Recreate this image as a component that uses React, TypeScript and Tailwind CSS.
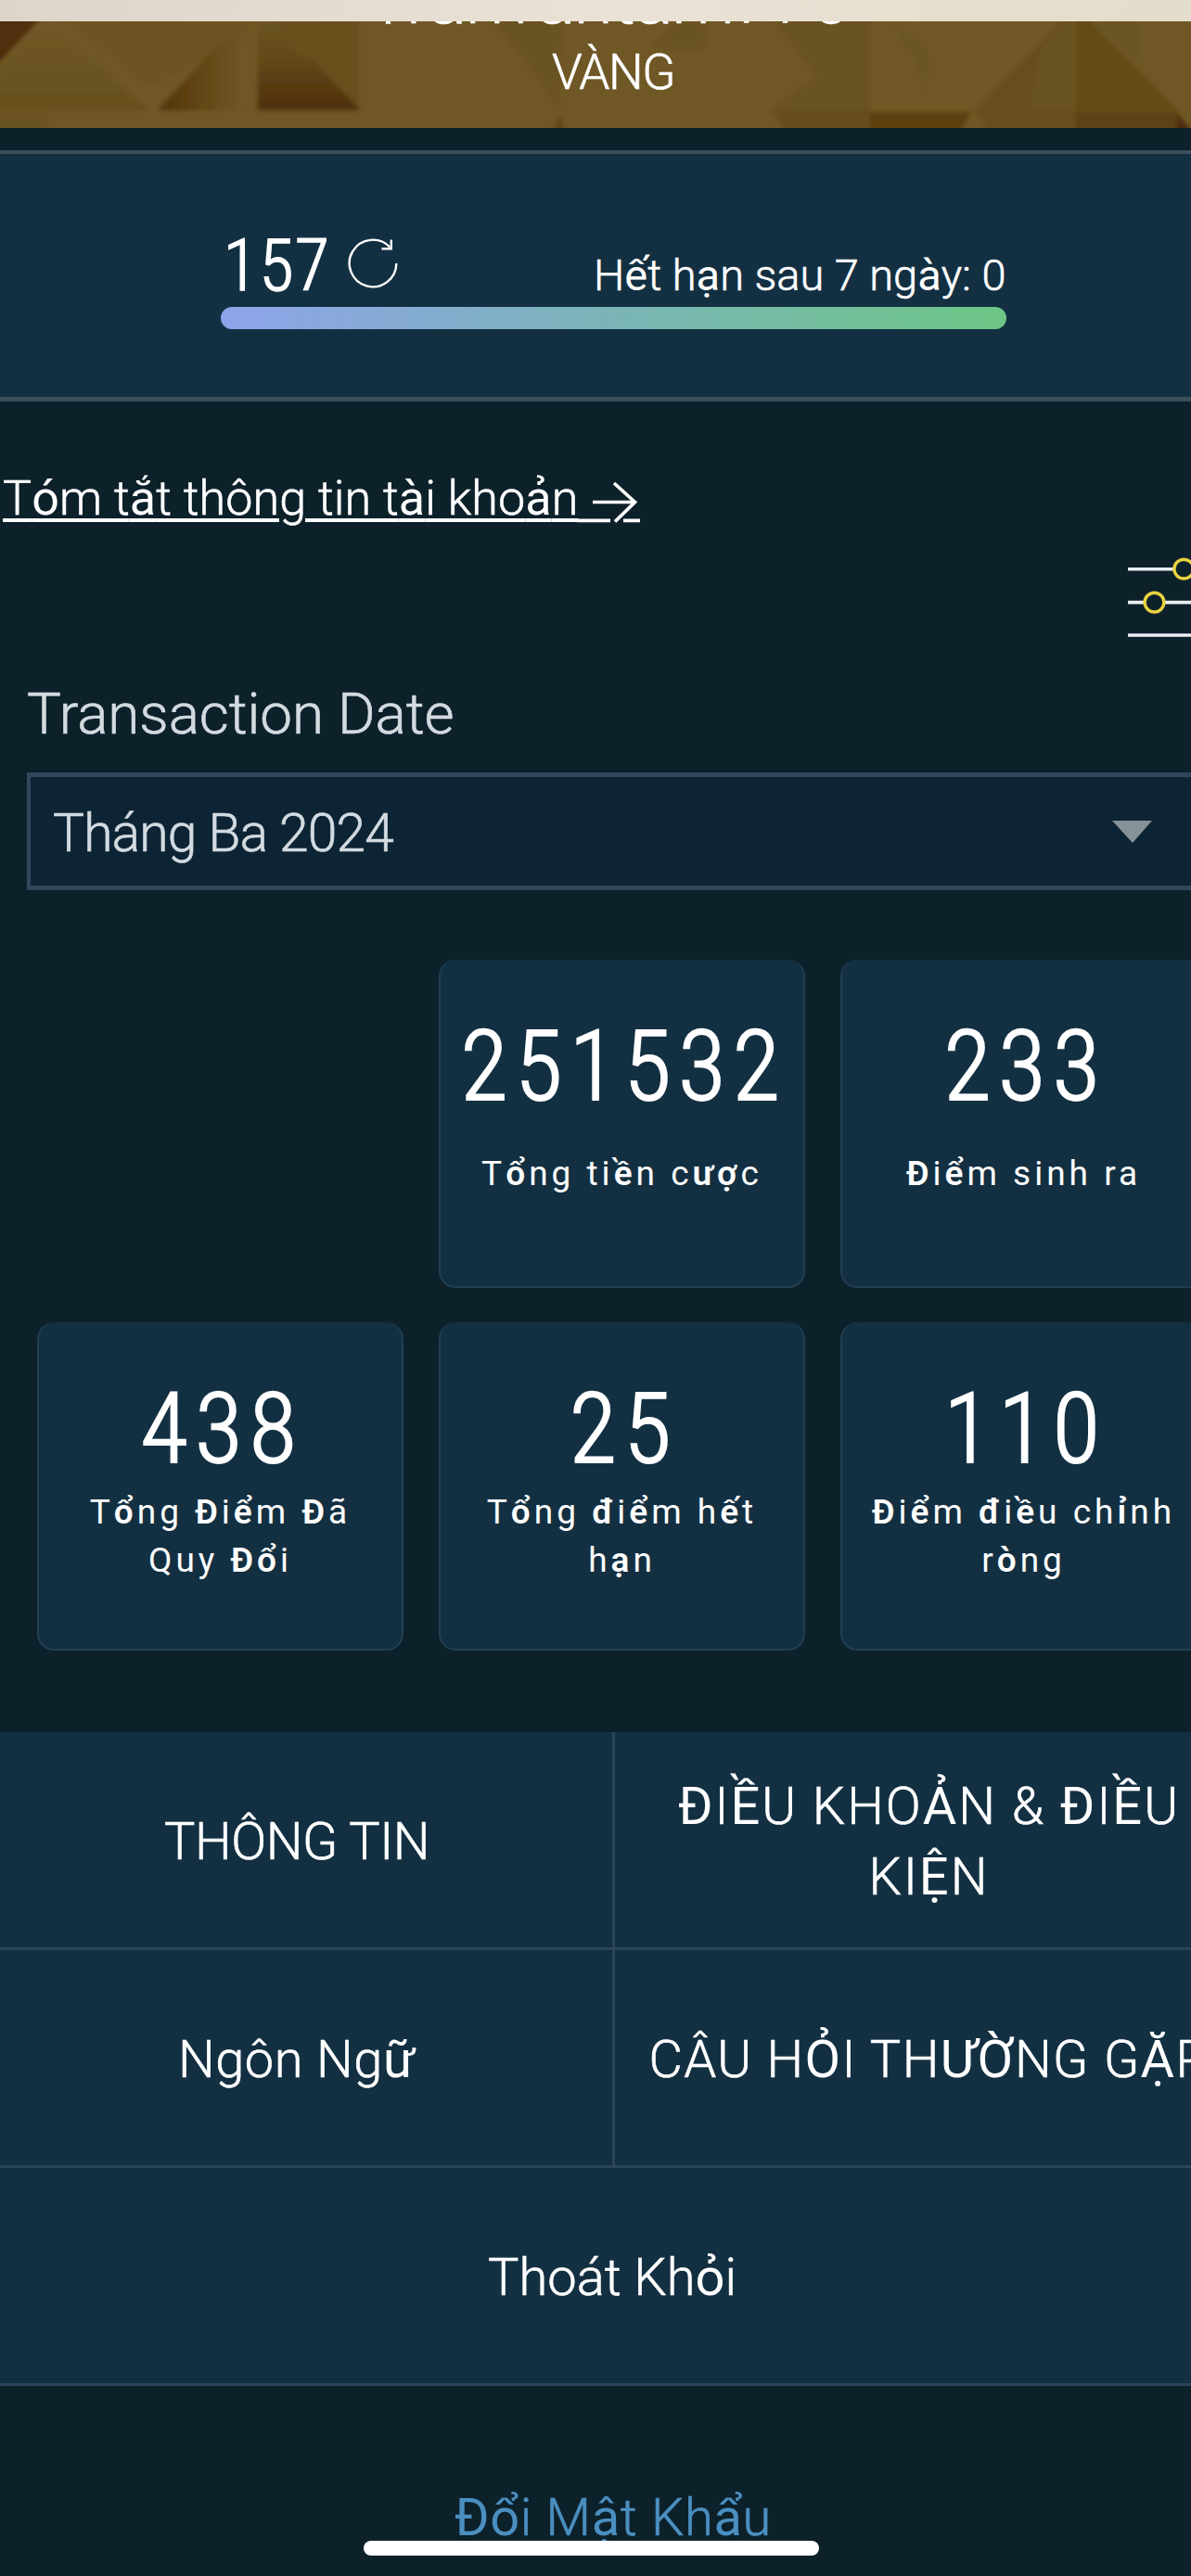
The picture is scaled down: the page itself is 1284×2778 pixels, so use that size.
import React from "react";

interface Stat {
  id: number;
  value: string;
  label: string[];
}

const stats: Stat[] = [
  { id: 1, value: "251532", label: ["Tổng tiền cược"] },
  { id: 2, value: "233", label: ["Điểm sinh ra"] },
  { id: 3, value: "438", label: ["Tổng Điểm Đã", "Quy Đổi"] },
  { id: 4, value: "25", label: ["Tổng điểm hết", "hạn"] },
  { id: 5, value: "110", label: ["Điểm điều chỉnh", "ròng"] },
];

const heavyLetters = /([\u1EA0-\u1EF9ĐđƯưƠơĂăóòà]+)/;

function Viet({ text, heavy = "font-normal" }: { text: string; heavy?: string }) {
  return (
    <>
      {text.split(heavyLetters).map((part, i) =>
        i % 2 === 1 ? (
          <span key={i} className={`[-webkit-text-stroke:0px] ${heavy}`}>
            {part}
          </span>
        ) : (
          part
        )
      )}
    </>
  );
}

function GoldPattern() {
  return (
    <svg className="absolute inset-x-0 bottom-0 h-[115px] w-[1284px]" viewBox="0 0 1284 115">
      <defs>
        <linearGradient id="fold" x1="0" y1="0" x2="1" y2="0">
          <stop offset="0" stopColor="#533509" />
          <stop offset="0.55" stopColor="#624816" />
          <stop offset="1" stopColor="#6f5826" />
        </linearGradient>
        <linearGradient id="box" x1="0" y1="0" x2="0" y2="1">
          <stop offset="0" stopColor="#6b5423" />
          <stop offset="0.4" stopColor="#634a18" />
          <stop offset="1" stopColor="#4d2f0b" />
        </linearGradient>
        <linearGradient id="shade" x1="0" y1="0" x2="0" y2="1">
          <stop offset="0" stopColor="#6f5826" />
          <stop offset="1" stopColor="#67501e" />
        </linearGradient>
        <filter id="soft" x="-5%" y="-5%" width="110%" height="110%">
          <feGaussianBlur stdDeviation="2" />
        </filter>
      </defs>
      <rect width="1284" height="115" fill="#6f5826" />
      <g filter="url(#soft)">
        <path d="M-6 -6H46L-6 50Z" fill="#512f0b" />
        <path d="M75 0H270V20L160 70Z" fill="#6c5523" />
        <path d="M-6 60L40 5L100 40L160 96H-6Z" fill="url(#shade)" />
        <path d="M-6 98H52V120H-6Z" fill="#6a5322" />
        <path d="M170 96L228 32L262 10V96Z" fill="url(#fold)" />
        <path d="M278 0H387V96H278Z" fill="url(#box)" />
        <path d="M322 38L335 40L387 94V0H300Z" fill="#67501f" />
        <path d="M497 0H604V90L555 30L530 0Z" fill="#6c5422" />
        <path d="M530 -6H606V20L600 92L565 40Z" fill="#6a5320" />
        <path d="M604 98L596 120H608Z" fill="#604814" />
        <path d="M730 0H760V30H700Z" fill="#6a5321" />
        <path d="M830 -6H938V120H846L832 93L880 60L850 20Z" fill="#6a5321" />
        <path d="M832 95H938V120H848Z" fill="#654e1c" />
        <path d="M962 0L1000 30V80L985 40Z" fill="#6b5523" />
        <path d="M938 98H1047L1034 120H938Z" fill="#5b4110" />
        <path d="M1050 96L1150 -6H1172L1272 98V120H1066Z" fill="#664f1c" />
        <path d="M1122 30L1150 -4L1160 0V96H1110Z" fill="#6a5321" />
        <path d="M1160 0H1172L1268 96H1160Z" fill="#634b18" />
        <path d="M1160 98H1268L1276 120H1160Z" fill="#5c4312" />
        <path d="M1180 0H1230V44Z" fill="#6b5524" />
        <path d="M1270 100L1288 122H1268Z" fill="#4c2a08" />
      </g>
    </svg>
  );
}

function RefreshIcon() {
  return (
    <svg
      className="ml-[17px] size-14"
      viewBox="0 0 56 56"
      fill="none"
      stroke="#fff"
      strokeWidth="2.4"
    >
      <path d="M53.3 27A25.3 25.3 0 1 1 46.3 9.5" />
      <path d="M47.8 1.5V11.2H37.5" />
    </svg>
  );
}

function FilterIcon() {
  return (
    <svg className="h-[88px] w-[106px]" viewBox="0 0 106 88" fill="none" strokeWidth="3.6">
      <path d="M0 13.7H49M71 13.7H106M0 49.6H17M39 49.6H106M0 85H106" stroke="#eceff3" />
      <g stroke="#e8d23f" strokeWidth="3.4">
        <circle cx="60.3" cy="13.6" r="10.4" />
        <circle cx="28.5" cy="49.6" r="10.4" />
      </g>
    </svg>
  );
}

const menuCell =
  "flex items-center justify-center pt-[5px] border-b-[3px] border-[#2a445a] whitespace-nowrap text-center";

export default function App() {
  return (
    <div className="relative h-[2778px] w-[1284px] overflow-hidden bg-[#0d212b] font-[Roboto,sans-serif] font-light text-white [-webkit-text-stroke:0.6px]">
      <div className="w-[1322px]">
        {/* tier header */}
        <header className="relative flex h-[138px] flex-col items-center overflow-hidden">
          <GoldPattern />
          <p className="relative -mt-[21px] h-10 pr-[10px] text-[77px] leading-10 tracking-[-1px]">Tranvantam770</p>
          <p className="relative mt-[27px] text-[53px] leading-16 tracking-[-1.5px]">VÀNG</p>
          <div className="absolute inset-x-0 top-0 h-[23px] bg-linear-to-r from-[#ddd5ca] via-[#eae2d5] to-[#e3dccb]" />
        </header>

        {/* points */}
        <section className="mt-6 h-[271px] border-t-4 border-b-[5px] border-[#3a4e5b] bg-[#133042] pt-[91px]">
          <div className="mx-auto w-[847px]">
            <div className="flex h-15 items-baseline">
              <span className="w-[119px] pl-[3px] text-[77px] leading-15 font-stretch-condensed tracking-[1.2px] [-webkit-text-stroke:1.3px]">
                157
              </span>
              <RefreshIcon />
              <span className="ml-auto text-[47px] leading-12">
                <Viet text="Hết hạn sau 7 ngày: 0" />
              </span>
            </div>
            <div className="mt-3.5 h-6 rounded-full bg-linear-to-r from-[#8fa3eb] via-[#7ab4b6] to-[#6dc685]" />
          </div>
        </section>

        <a className="mt-[73px] flex h-16 pl-[3px]">
          <span className="w-[619px] text-[52px] leading-16 tracking-[0.1px] whitespace-nowrap underline decoration-[3.7px] underline-offset-[4px]">
            <Viet text="Tóm tắt thông tin tài khoản" />
          </span>
          <svg className="h-16 w-[68px]" viewBox="0 0 68 64" fill="none" stroke="#fff" strokeWidth="3.7">
            <path d="M17 35.5H63M40 15L62.5 35.5L41 56.5" />
            <path d="M-4 55.3H36M50 55.3H68" />
          </svg>
        </a>

        <div className="mt-[30px] flex justify-end">
          <FilterIcon />
        </div>

        {/* month select */}
        <div className="mt-11 mr-[29px] ml-[29px] text-[#d3dbe0]">
          <label className="block text-[62px] leading-[76px] tracking-[-0.1px]">Transaction Date</label>
          <div className="mt-[25px] flex h-[127px] items-center justify-between border-x-4 border-y-[5px] border-[#30475c] bg-[#0d2435] pr-[47px] pl-6">
            <span className="pt-1 text-[57px] tracking-[-0.9px]">Tháng Ba 2024</span>
            <svg className="h-6 w-[43px]" viewBox="0 0 43 24">
              <path d="M0 0H43L22 24Z" fill="#869297" />
            </svg>
          </div>
        </div>

        {/* totals */}
        <div className="mt-[75px] ml-10 grid grid-cols-[395px_395px_395px] gap-x-[38px] gap-y-[37px]">
          <div />
          {stats.map((stat) => (
            <div
              key={stat.id}
              className="h-[354px] rounded-[18px] border-2 border-t-0 border-[#223f52] bg-[#133042] pt-14 text-center whitespace-nowrap"
            >
              <p className="pl-1 text-[105px] leading-[120px] font-stretch-condensed tracking-[7.6px] [-webkit-text-stroke:1.9px]">
                {stat.value}
              </p>
              <div className="mt-[3px] flex h-[104px] flex-col justify-center text-[37px] leading-[52px] font-normal tracking-[4px] [-webkit-text-stroke:0px]">
                {stat.label.map((line) => (
                  <p key={line}>
                    <Viet text={line} heavy="font-semibold" />
                  </p>
                ))}
              </div>
            </div>
          ))}
        </div>

        {/* menu */}
        <nav className="mt-[88px] -ml-5 grid w-[1360px] auto-rows-[235px] grid-cols-[683px_677px] bg-[#133042] text-[56px] leading-[75.4px]">
          <a className={`${menuCell} border-r-[3px] tracking-[-0.4px]`}>THÔNG TIN</a>
          <a className={`${menuCell} tracking-[2px]`}>
            <span>
              <Viet text="ĐIỀU KHOẢN & ĐIỀU" />
              <br />
              <Viet text="KIỆN" />
            </span>
          </a>
          <a className={`${menuCell} border-r-[3px] tracking-[0.5px]`}>
            <span>
              <Viet text="Ngôn Ngữ" />
            </span>
          </a>
          <a className={`${menuCell} tracking-[1.4px]`}>
            <span>
              <Viet text="CÂU HỎI THƯỜNG GẶP" />
            </span>
          </a>
          <a className={`${menuCell} col-span-2`}>
            <span>
              <Viet text="Thoát Khỏi" />
            </span>
          </a>
        </nav>

        <a className="mt-[104px] block text-center text-[56px] leading-[76px] tracking-[0.7px] text-[#4a8fc0]">
          <Viet text="Đổi Mật Khẩu" />
        </a>
      </div>

      {/* home indicator */}
      <div className="absolute bottom-[22px] left-[392px] h-4 w-[491px] rounded-full bg-white" />
    </div>
  );
}
